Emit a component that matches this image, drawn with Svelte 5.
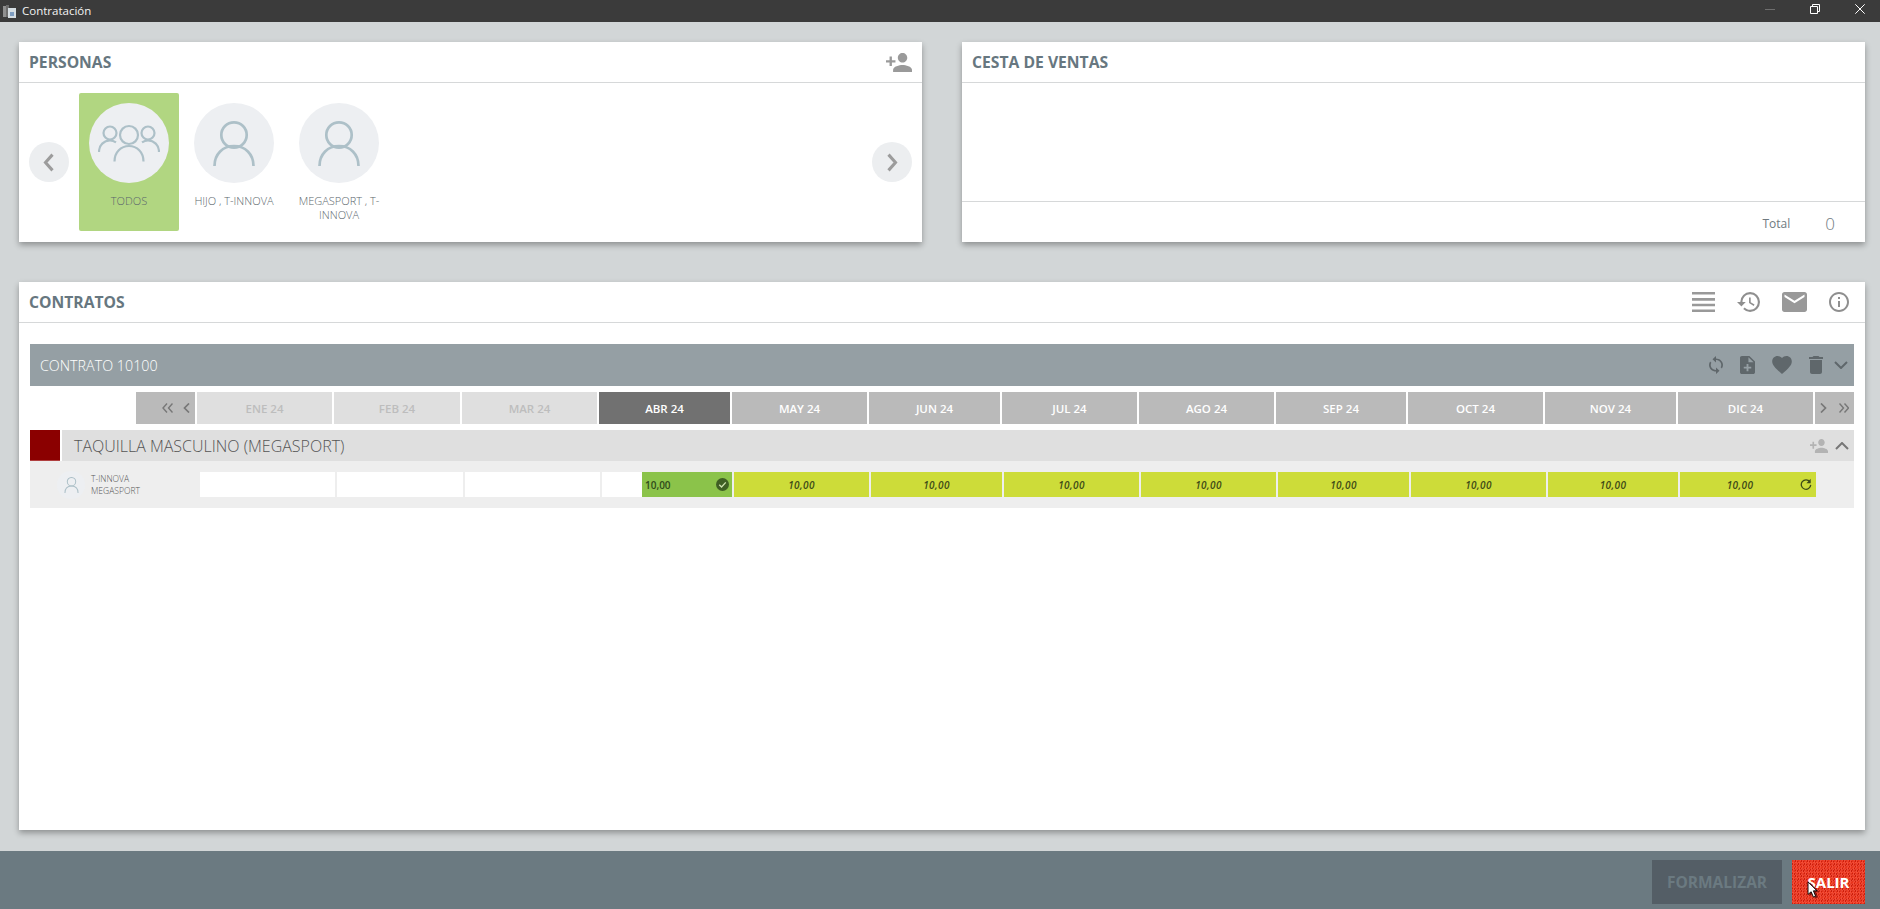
<script>
  const people = [
    { name: 'HIJO , T-INNOVA' },
    { name: 'MEGASPORT , T-INNOVA' }
  ];
  const past = ['ENE 24', 'FEB 24', 'MAR 24'];
  const future = ['MAY 24', 'JUN 24', 'JUL 24', 'AGO 24', 'SEP 24', 'OCT 24', 'NOV 24', 'DIC 24'];
  const personAdd = 'M15 12c2.21 0 4-1.79 4-4s-1.79-4-4-4-4 1.79-4 4 1.79 4 4 4zm-9-2V7H4v3H1v2h3v3h2v-3h3v-2H6zm9 4c-2.67 0-8 1.34-8 4v2h16v-2c0-2.66-5.33-4-8-4z';
</script>

<div class="app">
  <header class="titlebar">
    <svg class="appicon" viewBox="0 0 13 13" width="13" height="13">
      <rect x="0" y="1" width="3" height="11" fill="#8f8f8f" />
      <rect x="3" y="0" width="3" height="12" fill="#6d6d6d" />
      <rect x="5" y="3" width="8" height="10" fill="#d5dde2" />
      <rect x="7" y="7" width="4" height="4" fill="#7d9cc0" />
    </svg>
    <span class="apptitle">Contratación</span>
    <div class="winctl">
      <svg viewBox="0 0 10 10" width="10" height="10"><path d="M0 5.500h10" stroke="#6e6e6e" /></svg>
      <svg viewBox="0 0 10 10" width="10" height="10"><path d="M.5 2.500h7v7h-7zM2.500 2.500v-2h7v7h-2" fill="none" stroke="#fff" /></svg>
      <svg viewBox="0 0 10 10" width="10" height="10"><path d="M.3 .3l9.400 9.400M9.700 .3L.3 9.700" fill="none" stroke="#fff" /></svg>
    </div>
  </header>

  <main class="content">
    <div class="toprow">
      <section class="card personas">
        <div class="cardhead">
          <h2>PERSONAS</h2>
          <svg viewBox="1 4 22 16" width="26" height="19" preserveAspectRatio="none"><path d={personAdd} fill="#9a9a9a" /></svg>
        </div>
        <div class="carousel">
          <button class="arrow" aria-label="anterior">
            <svg viewBox="0 0 16 24" width="14" height="21"><path d="M12 3L4 12l8 9" fill="none" stroke="#9c9c9c" stroke-width="3.500" /></svg>
          </button>
          <div class="person selected">
            <div class="avatar">
              <svg viewBox="0 0 62 38" width="62" height="38" fill="none" stroke="#adc0c8" stroke-width="2.200">
                <circle cx="31" cy="11" r="9" />
                <path d="M16.500 37.500C16.500 28 23 22 31 22s14.500 6 14.500 15.500" />
                <circle cx="12" cy="9" r="6.500" />
                <path d="M1 28c0-7 5-11.500 11-11.500 2.500 0 4.300 .7 6 1.800" />
                <circle cx="50" cy="9" r="6.500" />
                <path d="M61 28c0-7-5-11.500-11-11.500-2.500 0-4.300 .7-6 1.800" />
              </svg>
            </div>
            <div class="pname">TODOS</div>
          </div>
          {#each people as p}
            <div class="person">
              <div class="avatar">
                <svg viewBox="0 0 42 46" width="42" height="46" fill="none" stroke="#adc0c8" stroke-width="2.700">
                  <circle cx="21" cy="15" r="12.700" />
                  <path d="M1.500 46C1.500 34 10 26 21 26s19.500 8 19.500 20" />
                </svg>
              </div>
              <div class="pname">{p.name}</div>
            </div>
          {/each}
          <button class="arrow next" aria-label="siguiente">
            <svg viewBox="0 0 16 24" width="14" height="21"><path d="M4 3l8 9-8 9" fill="none" stroke="#9c9c9c" stroke-width="3.500" /></svg>
          </button>
        </div>
      </section>

      <section class="card cesta">
        <div class="cardhead"><h2>CESTA DE VENTAS</h2></div>
        <div class="cestabody"></div>
        <div class="cestafoot">
          <span class="totlabel">Total</span>
          <span class="totval">0</span>
        </div>
      </section>
    </div>

    <section class="card contratos">
      <div class="cardhead">
        <h2>CONTRATOS</h2>
        <div class="headicons">
          <svg viewBox="0 0 23 20" width="23" height="20"><path d="M0 1.300h23M0 7.400h23M0 13h23M0 18.700h23" stroke="#999" stroke-width="2.600" /></svg>
          <svg viewBox="1 3 21 18" width="23" height="20" preserveAspectRatio="none"><path d="M13 3a9 9 0 0 0-9 9H1l3.890 3.890.07.14L9 12H6c0-3.870 3.130-7 7-7s7 3.130 7 7-3.130 7-7 7c-1.930 0-3.680-.79-4.940-2.060l-1.420 1.420A8.954 8.954 0 0 0 13 21a9 9 0 0 0 0-18zm-1 5v5l4.280 2.540.72-1.210-3.500-2.080V8H12z" fill="#8f8f8f" /></svg>
          <svg viewBox="2 4 20 16" width="25" height="20"><path d="M20 4H4c-1.100 0-2 .9-2 2v12c0 1.100.9 2 2 2h16c1.100 0 2-.9 2-2V6c0-1.100-.9-2-2-2zm0 4l-8 5-8-5V6l8 5 8-5v2z" fill="#999" /></svg>
          <svg viewBox="2 2 20 20" width="20" height="20"><path d="M11 7h2v2h-2zm0 4h2v6h-2zm1-9C6.480 2 2 6.480 2 12s4.480 10 10 10 10-4.480 10-10S17.520 2 12 2zm0 18c-4.410 0-8-3.590-8-8s3.590-8 8-8 8 3.590 8 8-3.590 8-8 8z" fill="#8f8f8f" /></svg>
        </div>
      </div>

      <div class="contractwrap">
        <div class="contractbar">
          <span class="ctitle">CONTRATO 10100</span>
          <div class="cicons">
            <svg viewBox="4 1 16 22" width="14" height="18" preserveAspectRatio="none"><path d="M12 4V1L8 5l4 4V6c3.310 0 6 2.690 6 6 0 1.010-.25 1.970-.7 2.800l1.460 1.460A7.930 7.930 0 0 0 20 12c0-4.420-3.580-8-8-8zm0 14c-3.310 0-6-2.690-6-6 0-1.010.25-1.970.7-2.800L5.240 7.740A7.930 7.930 0 0 0 4 12c0 4.420 3.580 8 8 8v3l4-4-4-4v3z" fill="#5f676b" /></svg>
            <svg viewBox="4 2 16 20" width="15" height="18" preserveAspectRatio="none"><path d="M14 2H6c-1.100 0-1.990.9-1.990 2L4 20c0 1.100.89 2 1.990 2H18c1.100 0 2-.9 2-2V8l-6-6zm2 14h-3v3h-2v-3H8v-2h3v-3h2v3h3v2zm-3-7V3.500L18.500 9H13z" fill="#5f676b" /></svg>
            <svg viewBox="2 3 20 18.350" width="20" height="18"><path d="M12 21.350l-1.450-1.320C5.400 15.360 2 12.280 2 8.500 2 5.420 4.420 3 7.500 3c1.740 0 3.410.81 4.500 2.090C13.090 3.810 14.760 3 16.500 3 19.580 3 22 5.420 22 8.500c0 3.780-3.400 6.860-8.550 11.540L12 21.350z" fill="#5f676b" /></svg>
            <svg viewBox="5 3 14 18" width="14" height="18"><path d="M6 19c0 1.100.9 2 2 2h8c1.100 0 2-.9 2-2V7H6v12zM19 4h-3.500l-1-1h-5l-1 1H5v2h14V4z" fill="#5f676b" /></svg>
            <svg class="ccaret" viewBox="0 0 14 8" width="14" height="8"><path d="M1 1l6 6 6-6" fill="none" stroke="#5f676b" stroke-width="2" /></svg>
          </div>
        </div>

        <div class="months">
          <div class="mnav left">
            <svg viewBox="0 0 11 10" width="11" height="10"><path d="M5 .5L1 5l4 4.500M10.500 .5L6.500 5l4 4.500" fill="none" stroke="#777" stroke-width="1.400" /></svg>
            <svg viewBox="0 0 7 10" width="7" height="10"><path d="M6 .5L1.500 5 6 9.500" fill="none" stroke="#777" stroke-width="1.700" /></svg>
          </div>
          {#each past as m}<div class="month past">{m}</div>{/each}
          <div class="month current">ABR 24</div>
          {#each future as m}<div class="month future">{m}</div>{/each}
          <div class="mnav right">
            <svg viewBox="0 0 7 10" width="7" height="10"><path d="M1 .5L5.500 5 1 9.500" fill="none" stroke="#777" stroke-width="1.700" /></svg>
            <svg viewBox="0 0 10 10" width="10" height="10"><path d="M.5 .5l4 4.500-4 4.500M5.500 .5l4 4.500-4 4.500" fill="none" stroke="#777" stroke-width="1.400" /></svg>
          </div>
        </div>

        <div class="linehead">
          <div class="swatch"></div>
          <div class="linetitle">
            <span>TAQUILLA MASCULINO (MEGASPORT)</span>
            <div class="lineicons">
              <svg viewBox="1 4 22 16" width="18" height="14" preserveAspectRatio="none"><path d={personAdd} fill="#b3b3b3" /></svg>
              <svg viewBox="0 0 14 8" width="14" height="8"><path d="M1 7l6-6 6 6" fill="none" stroke="#777" stroke-width="2" /></svg>
            </div>
          </div>
        </div>

        <div class="linerow">
          <div class="who">
            <div class="miniavatar">
              <svg viewBox="0 0 16 17" width="15" height="16" fill="none" stroke="#adc0c8" stroke-width="1.100"><circle cx="8" cy="5" r="4.500" /><path d="M1 17c0-5 3-7.500 7-7.500s7 2.500 7 7.500" /></svg>
            </div>
            <div class="whotext"><div>T-INNOVA</div><div>MEGASPORT</div></div>
          </div>
          <div class="cells">
            <div class="cell blank"></div>
            <div class="cell blank"></div>
            <div class="cell blank"></div>
            <div class="cell blank"></div>
            <div class="cell paid">
              <span>10,00</span>
              <svg viewBox="0 0 14 14" width="13" height="13"><circle cx="7" cy="7" r="7" fill="#3f5f24" /><path d="M3.500 7.200l2.500 2.500 4.500-5" fill="none" stroke="#cfe3b0" stroke-width="1.400" /></svg>
            </div>
            {#each future as m, i}
              <div class="cell due" class:last={i === future.length - 1}>
                <span>10,00</span>
                {#if i === future.length - 1}
                  <svg class="renew" viewBox="0 0 14 14" width="12" height="12"><path d="M11.500 4.500A5.500 5.500 0 1 0 12.500 8" fill="none" stroke="#3d4a18" stroke-width="1.500" /><path d="M12.500 1v5h-5z" fill="#3d4a18" /></svg>
                {/if}
              </div>
            {/each}
          </div>
        </div>
      </div>
    </section>
  </main>

  <footer class="bottombar">
    <button class="btn formalizar">FORMALIZAR</button>
    <button class="btn salir">SALIR</button>
    <svg class="cursor" viewBox="0 0 12 19" width="11" height="17"><path d="M1 1v14l3.500-3 2.500 6 2.500-1-2.500-6H11z" fill="#fff" stroke="#000" stroke-width="1" /></svg>
  </footer>
</div>

<style>
  :global(html) { overflow: hidden; }
  :global(body) {
    margin: 0;
    background: #d2d6d7;
    font-family: "Open Sans", "Noto Sans", sans-serif;
  }
  .app {
    width: 1880px;
    height: 909px;
    display: flex;
    flex-direction: column;
    overflow: hidden;
    position: relative;
  }
  .titlebar {
    height: 22px;
    flex: none;
    background: #3b3b3b;
    display: flex;
    align-items: center;
    padding: 0 0 0 3px;
    color: #fff;
  }
  .appicon { margin-right: 6px; }
  .apptitle { font-size: 11.500px; color: #f2f2f2; padding-bottom: 1px; }
  .winctl {
    margin-left: auto;
    display: flex;
    align-items: center;
    gap: 35px;
    padding: 0 15px 4px 0;
  }
  .content {
    flex: 1;
    padding: 20px 15px 21px 19px;
    display: flex;
    flex-direction: column;
    gap: 40px;
    min-height: 0;
  }
  .toprow {
    display: flex;
    gap: 40px;
    height: 200px;
    flex: none;
  }
  .card {
    background: #fff;
    box-shadow: 0 3px 6px rgba(0, 0, 0, 0.32);
    display: flex;
    flex-direction: column;
  }
  .personas { width: 903px; }
  .cesta { width: 903px; }
  .cardhead {
    height: 40px;
    flex: none;
    box-sizing: content-box;
    border-bottom: 1px solid #d6d8d9;
    display: flex;
    align-items: center;
    justify-content: space-between;
    padding: 0 10px;
  }
  h2 {
    margin: 0;
    font-size: 15.700px;
    font-weight: 700;
    color: #677780;
  }
  .carousel {
    flex: 1;
    display: flex;
    align-items: flex-start;
    padding: 10px 10px 0;
  }
  .arrow {
    width: 40px;
    height: 40px;
    border-radius: 50%;
    border: 0;
    padding: 0;
    background: #eceef0;
    display: grid;
    place-items: center;
    margin-top: 49px;
    margin-right: 10px;
    flex: none;
  }
  .arrow.next {
    margin-left: auto;
    margin-right: 0;
  }
  .person {
    width: 100px;
    height: 138px;
    margin-right: 5px;
    border-radius: 2px;
    box-sizing: border-box;
    padding-top: 10px;
    display: flex;
    flex-direction: column;
    align-items: center;
  }
  .person.selected { background: #b1d681; }
  .avatar {
    width: 80px;
    height: 80px;
    border-radius: 50%;
    background: #edeff2;
    display: grid;
    place-items: center;
    flex: none;
  }
  .pname {
    margin-top: 11px;
    font-size: 11px;
    line-height: 14px;
    font-weight: 300;
    color: #5c676d;
    text-align: center;
    width: 84px;
  }
  .cestabody {
    height: 118px;
    flex: none;
    border-bottom: 1px solid #d6d8d9;
  }
  .cestafoot {
    flex: 1;
    display: flex;
    align-items: center;
    justify-content: flex-end;
    padding: 3px 30px 0 0;
    color: #6f7a80;
  }
  .totlabel { font-size: 12px; margin-right: 35px; }
  .totval { font-size: 17px; font-weight: 300; }
  .contratos { flex: 1; min-height: 0; }
  .headicons {
    display: flex;
    align-items: center;
    gap: 22px;
    padding-right: 6px;
  }
  .contractwrap {
    padding: 21px 11px 0;
  }
  .contractbar {
    height: 42px;
    background: #959fa4;
    display: flex;
    align-items: center;
    justify-content: space-between;
    padding: 0 6px 0 10px;
    color: #fff;
  }
  .ctitle { font-size: 14.300px; font-weight: 300; }
  .cicons {
    display: flex;
    align-items: center;
    gap: 17px;
  }
  .ccaret { margin-left: -6px; }
  .months {
    margin-top: 6px;
    height: 32px;
    display: grid;
    grid-template-columns: 59px 135px 126px 135px 131px 135px 131px 135px 135px 130px 135px 131px 135px 39px;
    column-gap: 2px;
    margin-left: 106px;
  }
  .month {
    display: grid;
    place-items: center;
    font-size: 11.500px;
    font-weight: 600;
  }
  .past { background: #dfdfdf; color: #bdbdbd; }
  .current { background: #717171; color: #fff; }
  .future { background: #bababa; color: #fff; }
  .mnav {
    background: #bababa;
    display: flex;
    align-items: center;
  }
  .mnav.left { justify-content: flex-end; gap: 10px; padding-right: 5px; }
  .mnav.right { justify-content: flex-start; gap: 12px; padding-left: 5px; }
  .linehead {
    margin-top: 6px;
    height: 31px;
    display: flex;
    gap: 2px;
  }
  .swatch {
    width: 30px;
    background: #8b0000;
    border-bottom: 1px solid #b04040;
    box-sizing: border-box;
  }
  .linetitle {
    flex: 1;
    background: #dfdfdf;
    display: flex;
    align-items: center;
    justify-content: space-between;
    padding: 0 5px 0 12px;
    font-size: 16px;
    font-weight: 300;
    color: #555;
  }
  .lineicons { display: flex; align-items: center; gap: 7px; }
  .linerow {
    height: 47px;
    background: #eee;
    display: flex;
    align-items: center;
  }
  .who {
    width: 170px;
    flex: none;
    display: flex;
    align-items: center;
    padding-left: 27px;
    box-sizing: border-box;
  }
  .miniavatar {
    width: 28px;
    height: 28px;
    border-radius: 50%;
    background: #edeff2;
    display: grid;
    place-items: center;
    margin-right: 6px;
    flex: none;
  }
  .whotext {
    font-size: 8.500px;
    line-height: 12px;
    font-weight: 300;
    color: #555;
  }
  .cells {
    height: 25px;
    display: grid;
    grid-template-columns: 135px 126px 135px 40px 88px 135px 131px 135px 135px 131px 135px 130px 136px;
    column-gap: 2px;
  }
  .cell {
    position: relative;
    display: flex;
    align-items: center;
    justify-content: center;
    font-size: 10px;
  }
  .blank { background: #fff; }
  .paid {
    background: #8bc34a;
    justify-content: space-between;
    margin-left: -2px;
    padding: 0 3px 0 3px;
    color: #2f4a1a;
    font-weight: 600;
  }
  .due {
    background: #cddc39;
    color: #3d4a18;
    font-style: italic;
    font-weight: 600;
    letter-spacing: 0.4px;
  }
  .due.last { padding-right: 16px; }
  .renew {
    position: absolute;
    right: 4px;
    top: 6px;
  }
  .bottombar {
    height: 58px;
    flex: none;
    background: #6b7a81;
    display: flex;
    align-items: center;
    justify-content: flex-end;
    gap: 10px;
    padding: 9px 15px 5px 0;
    box-sizing: border-box;
    position: relative;
  }
  .btn {
    height: 44px;
    border: 0;
    font-family: inherit;
    font-size: 15px;
    font-weight: 700;
    padding: 0;
  }
  .formalizar {
    width: 130px;
    font-size: 15.500px;
    background: #545e66;
    color: #6b7a81;
  }
  .salir {
    width: 73px;
    color: #fff;
    background:
      repeating-conic-gradient(rgba(255, 100, 80, 0.5) 0 25%, transparent 0 50%) 0 0 / 3px 3px,
      repeating-conic-gradient(rgba(170, 10, 0, 0.5) 0 25%, transparent 0 50%) 0 0 / 2px 5px,
      #e8341c;
  }
  .cursor {
    position: absolute;
    left: 1807px;
    top: 30px;
    filter: drop-shadow(2px 1px 0 rgba(80, 0, 0, 0.6));
  }
</style>
